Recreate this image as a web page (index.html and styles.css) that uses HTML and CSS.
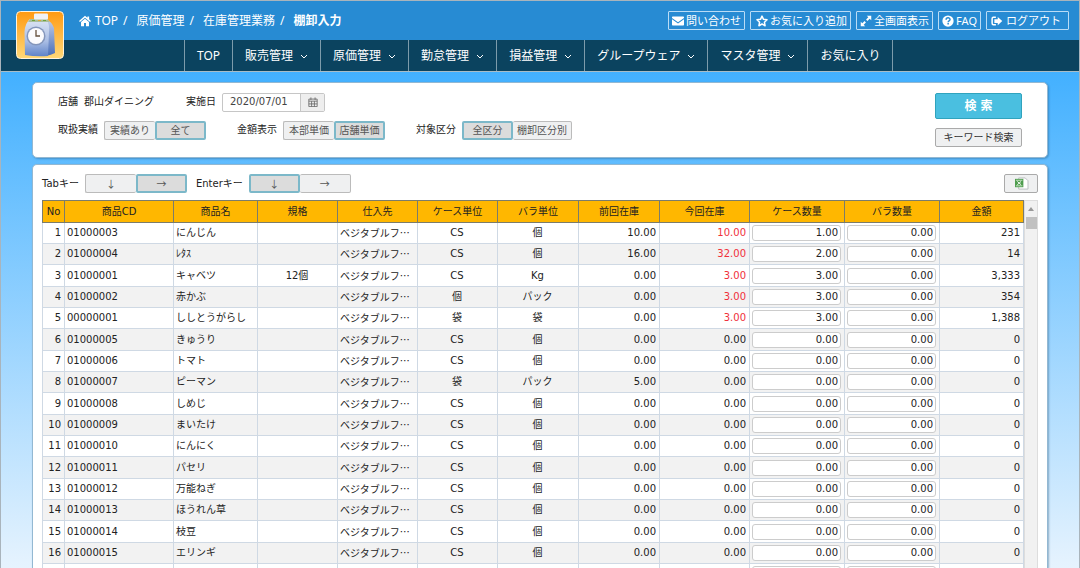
FILE: index.html
```html
<!DOCTYPE html>
<html lang="ja">
<head>
<meta charset="utf-8">
<title>棚卸入力</title>
<meta name="viewport" content="width=device-width, initial-scale=1">
<link rel="stylesheet" href="styles.css">
</head>
<body>
<header class="site-header">
  <div class="topbar">
    <nav class="crumbs" aria-label="パンくず">
      <a href="#"><svg class="icon" viewBox="0 0 16 16"><path d="M8 1 0 8l1.200 1.300L8 3.600l6.800 5.700L16 8l-2.500-2.200V2h-2.300v1.800zM8 5 2.700 9.300V15h4V10.500h2.600V15h4V9.300z"/></svg>TOP</a><span>/</span>
      <a href="#">原価管理</a><span>/</span>
      <a href="#">在庫管理業務</a><span>/</span>
      <strong>棚卸入力</strong>
    </nav>
    <div class="tools">
      <button type="button" class="tool"><svg class="icon" viewBox="0 0 16 16"><path d="M1 2h14a1 1 0 0 1 1 1v1L8 9.500 0 4V3a1 1 0 0 1 1-1zM0 5.800 8 11.300l8-5.500V13a1 1 0 0 1-1 1H1a1 1 0 0 1-1-1z"/></svg>問い合わせ</button>
      <button type="button" class="tool tool-star"><svg class="icon" viewBox="0 0 16 16"><path d="M8 1.500l2 4.300 4.700.6-3.500 3.200.9 4.700L8 12l-4.100 2.300.9-4.700L1.300 6.400 6 5.800z" fill="none" stroke="currentColor" stroke-width="2" stroke-linejoin="round"/></svg>お気に入り追加</button>
      <button type="button" class="tool"><svg class="icon" viewBox="0 0 16 16"><path d="M9 1h6v6l-2.100-2.100-3 3-1.800-1.800 3-3zM7 15H1V9l2.100 2.100 3-3 1.800 1.800-3 3z"/></svg>全画面表示</button>
      <button type="button" class="tool"><svg class="icon" viewBox="0 0 16 16"><circle cx="8" cy="8" r="7.500"/><path d="M5.500 6.300C5.500 3 10.700 3.100 10.700 6c0 1.900-2.500 1.900-2.500 3.600M8.200 10.800v2" fill="none" stroke="#278bd3" stroke-width="2"/></svg>FAQ</button>
      <button type="button" class="tool tool-wide"><svg class="icon" viewBox="0 0 16 16"><path d="M6.500 3H3.200Q1.500 3 1.500 5v6q0 2 1.700 2h3.300" fill="none" stroke="currentColor" stroke-width="2"/><path d="M9 2.500 15 8l-6 5.500V10.500H4.500v-5H9z"/></svg>ログアウト</button>
    </div>
  </div>
  <nav class="menu" aria-label="メニュー">
    <a href="#">TOP</a>
    <a href="#">販売管理<svg class="chev" viewBox="0 0 8 8"><path d="M1 3l3 3 3-3"/></svg></a>
    <a href="#">原価管理<svg class="chev" viewBox="0 0 8 8"><path d="M1 3l3 3 3-3"/></svg></a>
    <a href="#">勤怠管理<svg class="chev" viewBox="0 0 8 8"><path d="M1 3l3 3 3-3"/></svg></a>
    <a href="#">損益管理<svg class="chev" viewBox="0 0 8 8"><path d="M1 3l3 3 3-3"/></svg></a>
    <a href="#">グループウェア<svg class="chev" viewBox="0 0 8 8"><path d="M1 3l3 3 3-3"/></svg></a>
    <a href="#">マスタ管理<svg class="chev" viewBox="0 0 8 8"><path d="M1 3l3 3 3-3"/></svg></a>
    <a href="#">お気に入り</a>
  </nav>
  <svg class="logo" viewBox="0 0 48 48">
    <defs>
      <linearGradient id="sky" x1="0" y1="0" x2="0" y2="1"><stop offset="0" stop-color="#ff9a12"/><stop offset="1" stop-color="#ffd877"/></linearGradient>
      <linearGradient id="body" x1="0" y1="0" x2="0" y2="1"><stop offset="0" stop-color="#dde5f4"/><stop offset=".6" stop-color="#a9bde4"/><stop offset="1" stop-color="#5f83c8"/></linearGradient>
      <linearGradient id="side" x1="0" y1="0" x2="0" y2="1"><stop offset="0" stop-color="#c3cfe8"/><stop offset="1" stop-color="#4a6fb9"/></linearGradient>
    </defs>
    <rect x=".5" y=".5" width="47" height="47" rx="4" fill="url(#sky)" stroke="#fff3dd"/>
    <path d="M30 8q6 3 8 9l1 25q-4 2-9 3z" fill="url(#side)"/>
    <path d="M14 8h16q4 5 3 13l-1 24q-12 1-23-1L8.500 21Q9 12 14 8z" fill="url(#body)"/>
    <path d="M14 8h17l3 3H12z" fill="#a9bf9a"/>
    <path d="M16 9.500h3M27 9.500h3" stroke="#6fa23c"/>
    <path d="M22 9.500h3" stroke="#e0a637"/>
    <rect x="18" y="2.500" width="14" height="6" rx="1" fill="#f1f2f5"/>
    <circle cx="20" cy="25" r="9.500" fill="#8496bb"/>
    <circle cx="20" cy="25" r="8" fill="#fbfbfd"/>
    <path d="M20 19v6h4" fill="none" stroke="#66513f" stroke-width="1.300"/>
  </svg>
</header>
<main class="page">
  <form class="panel search">
    <div class="filters">
      <div class="line">
        <div class="pair"><span>店舗</span><span class="shop">郡山ダイニング</span></div>
        <label class="pair date">実施日 <span class="datebox"><input type="text" value="2020/07/01"><button type="button" aria-label="カレンダー"><svg class="cal" viewBox="0 0 12 12"><path d="M1 2.500h10v9H1zM1 5h10M1 8.300h10M4.300 5v6.500M7.700 5v6.500M3.500.5v3M8.500.5v3"/></svg></button></span></label>
      </div>
      <div class="line">
        <div class="pair first">取扱実績 <div class="seg"><button type="button">実績あり</button><button type="button" class="on">全て</button></div></div>
        <div class="pair second">金額表示 <div class="seg"><button type="button">本部単価</button><button type="button" class="on">店舗単価</button></div></div>
        <div class="pair">対象区分 <div class="seg"><button type="button" class="on">全区分</button><button type="button">棚卸区分別</button></div></div>
      </div>
    </div>
    <div class="actions">
      <button type="button" class="go">検 索</button>
      <button type="button" class="keyword">キーワード検索</button>
    </div>
  </form>
  <section class="panel list">
    <div class="keys">
      <div class="pair">Tabキー <div class="seg"><button type="button">↓</button><button type="button" class="on">→</button></div></div>
      <div class="pair">Enterキー <div class="seg"><button type="button" class="on">↓</button><button type="button">→</button></div></div>
      <button type="button" class="excel" aria-label="Excel出力"><svg viewBox="0 0 16 14"><path d="M5 1h7l3 3v9H5z" fill="#fff" stroke="#b9bcc0"/><rect x="1" y="2" width="9" height="9" fill="#4f9d4f"/><path d="M2 3.500h7M2 9.500h7" stroke="#c9e5c5"/><path d="M3.500 4.800l4 3.500M7.500 4.800l-4 3.500" stroke="#fff"/></svg></button>
    </div>
    <div class="gridbox">
      <table class="grid">
        <colgroup><col class="w-no"><col class="w-cd"><col class="w-name"><col class="w-unit"><col class="w-unit"><col class="w-unit"><col class="w-unit2"><col class="w-unit2"><col class="w-now"><col class="w-qty"><col class="w-qty"><col class="w-sum"></colgroup>
        <thead><tr><th>No</th><th>商品CD</th><th>商品名</th><th>規格</th><th>仕入先</th><th>ケース単位</th><th>バラ単位</th><th>前回在庫</th><th>今回在庫</th><th>ケース数量</th><th>バラ数量</th><th>金額</th></tr></thead>
        <tbody>
          <tr><td>1</td><td>01000003</td><td>にんじん</td><td></td><td>ベジタブルフ…</td><td>CS</td><td>個</td><td>10.00</td><td class="red">10.00</td><td><input value="1.00" aria-label="ケース数量"></td><td><input value="0.00" aria-label="バラ数量"></td><td>231</td></tr>
          <tr><td>2</td><td>01000004</td><td>ﾚﾀｽ</td><td></td><td>ベジタブルフ…</td><td>CS</td><td>個</td><td>16.00</td><td class="red">32.00</td><td><input value="2.00" aria-label="ケース数量"></td><td><input value="0.00" aria-label="バラ数量"></td><td>14</td></tr>
          <tr><td>3</td><td>01000001</td><td>キャベツ</td><td>12個</td><td>ベジタブルフ…</td><td>CS</td><td>Kg</td><td>0.00</td><td class="red">3.00</td><td><input value="3.00" aria-label="ケース数量"></td><td><input value="0.00" aria-label="バラ数量"></td><td>3,333</td></tr>
          <tr><td>4</td><td>01000002</td><td>赤かぶ</td><td></td><td>ベジタブルフ…</td><td>個</td><td>パック</td><td>0.00</td><td class="red">3.00</td><td><input value="3.00" aria-label="ケース数量"></td><td><input value="0.00" aria-label="バラ数量"></td><td>354</td></tr>
          <tr><td>5</td><td>00000001</td><td>ししとうがらし</td><td></td><td>ベジタブルフ…</td><td>袋</td><td>袋</td><td>0.00</td><td class="red">3.00</td><td><input value="3.00" aria-label="ケース数量"></td><td><input value="0.00" aria-label="バラ数量"></td><td>1,388</td></tr>
          <tr><td>6</td><td>01000005</td><td>きゅうり</td><td></td><td>ベジタブルフ…</td><td>CS</td><td>個</td><td>0.00</td><td>0.00</td><td><input value="0.00" aria-label="ケース数量"></td><td><input value="0.00" aria-label="バラ数量"></td><td>0</td></tr>
          <tr><td>7</td><td>01000006</td><td>トマト</td><td></td><td>ベジタブルフ…</td><td>CS</td><td>個</td><td>0.00</td><td>0.00</td><td><input value="0.00" aria-label="ケース数量"></td><td><input value="0.00" aria-label="バラ数量"></td><td>0</td></tr>
          <tr><td>8</td><td>01000007</td><td>ピーマン</td><td></td><td>ベジタブルフ…</td><td>袋</td><td>パック</td><td>5.00</td><td>0.00</td><td><input value="0.00" aria-label="ケース数量"></td><td><input value="0.00" aria-label="バラ数量"></td><td>0</td></tr>
          <tr><td>9</td><td>01000008</td><td>しめじ</td><td></td><td>ベジタブルフ…</td><td>CS</td><td>個</td><td>0.00</td><td>0.00</td><td><input value="0.00" aria-label="ケース数量"></td><td><input value="0.00" aria-label="バラ数量"></td><td>0</td></tr>
          <tr><td>10</td><td>01000009</td><td>まいたけ</td><td></td><td>ベジタブルフ…</td><td>CS</td><td>個</td><td>0.00</td><td>0.00</td><td><input value="0.00" aria-label="ケース数量"></td><td><input value="0.00" aria-label="バラ数量"></td><td>0</td></tr>
          <tr><td>11</td><td>01000010</td><td>にんにく</td><td></td><td>ベジタブルフ…</td><td>CS</td><td>個</td><td>0.00</td><td>0.00</td><td><input value="0.00" aria-label="ケース数量"></td><td><input value="0.00" aria-label="バラ数量"></td><td>0</td></tr>
          <tr><td>12</td><td>01000011</td><td>パセリ</td><td></td><td>ベジタブルフ…</td><td>CS</td><td>個</td><td>0.00</td><td>0.00</td><td><input value="0.00" aria-label="ケース数量"></td><td><input value="0.00" aria-label="バラ数量"></td><td>0</td></tr>
          <tr><td>13</td><td>01000012</td><td>万能ねぎ</td><td></td><td>ベジタブルフ…</td><td>CS</td><td>個</td><td>0.00</td><td>0.00</td><td><input value="0.00" aria-label="ケース数量"></td><td><input value="0.00" aria-label="バラ数量"></td><td>0</td></tr>
          <tr><td>14</td><td>01000013</td><td>ほうれん草</td><td></td><td>ベジタブルフ…</td><td>CS</td><td>個</td><td>0.00</td><td>0.00</td><td><input value="0.00" aria-label="ケース数量"></td><td><input value="0.00" aria-label="バラ数量"></td><td>0</td></tr>
          <tr><td>15</td><td>01000014</td><td>枝豆</td><td></td><td>ベジタブルフ…</td><td>CS</td><td>個</td><td>0.00</td><td>0.00</td><td><input value="0.00" aria-label="ケース数量"></td><td><input value="0.00" aria-label="バラ数量"></td><td>0</td></tr>
          <tr><td>16</td><td>01000015</td><td>エリンギ</td><td></td><td>ベジタブルフ…</td><td>CS</td><td>個</td><td>0.00</td><td>0.00</td><td><input value="0.00" aria-label="ケース数量"></td><td><input value="0.00" aria-label="バラ数量"></td><td>0</td></tr>
          <tr><td></td><td></td><td></td><td></td><td></td><td></td><td></td><td></td><td></td><td><input aria-label="ケース数量"></td><td><input aria-label="バラ数量"></td><td></td></tr>
        </tbody>
      </table>
      <div class="scroll"><svg viewBox="0 0 8 6"><path d="M1 5l3-4 3 4z"/></svg><div class="thumb"></div></div>
    </div>
  </section>
</main>
</body>
</html>
```
FILE: styles.css
```css
* { box-sizing: border-box; }
body {
  margin: 0;
  height: 100vh;
  overflow: hidden;
  display: flex;
  flex-direction: column;
  border: solid #a9b4bc;
  border-width: 1px 1px 0;
  background: linear-gradient(#42b0ff 70px, #e6f3fe);
  font: 10px/14px "DejaVu Sans", "Noto Sans CJK JP", sans-serif;
  color: #222;
}
button, input { font: inherit; color: inherit; margin: 0; }
.icon { width: 12px; height: 12px; fill: currentColor; flex: none; }

.site-header {
  position: relative;
  flex: none;
  color: #fff;
  font-family: "Noto Sans", "Noto Sans CJK JP", sans-serif;
  font-size: 12px;
  line-height: 16px;
}
.topbar {
  display: flex;
  justify-content: space-between;
  align-items: center;
  height: 39px;
  padding: 0 10px 0 78px;
  background: #278bd3;
}
.crumbs { display: flex; align-items: center; }
.crumbs a { display: flex; align-items: center; gap: 4px; color: inherit; text-decoration: none; }
.crumbs span { margin: 0 9px 0 5px; }
.tools { display: flex; gap: 5px; }
.tool {
  display: flex;
  align-items: center;
  gap: 2px;
  height: 19px;
  padding: 0 3px;
  border: 1px solid #b9dcf6;
  border-radius: 1px;
  background: none;
  font-size: 11px;
}
.tool-star { padding: 0 3px 0 5px; }
.tool-wide { padding: 0 7px 0 4px; gap: 3px; }

.menu {
  display: flex;
  height: 32px;
  padding-left: 183px;
  background: #0b435f;
  border-bottom: 1px solid #a9bcc6;
}
.menu a {
  display: flex;
  align-items: center;
  gap: 7px;
  padding: 0 12px;
  border-left: 1px solid #7d9cab;
  color: #fff;
  text-decoration: none;
}
.menu a:last-child { border-right: 1px solid #7d9cab; }
.chev { width: 8px; height: 8px; fill: none; stroke: #fff; }
.logo { position: absolute; left: 15px; top: 10px; width: 48px; height: 48px; }

.page {
  flex: 1;
  min-height: 0;
  display: flex;
  flex-direction: column;
  gap: 6px;
  padding: 10px 31px 0;
}
.panel {
  background: #fff;
  border: 1px solid #93b8d2;
  border-radius: 5px;
  box-shadow: 1px 1px 2px rgba(30, 80, 120, .4);
}
.search { flex: none; display: flex; justify-content: space-between; height: 76px; padding: 9px 25px 0; }
.filters { display: flex; flex-direction: column; gap: 8px; }
.line { display: flex; align-items: center; height: 20px; }
.pair { display: flex; align-items: center; gap: 6px; }
.date { margin-left: 32px; }
.first, .second { margin-right: 31px; }
.datebox { display: flex; width: 103px; height: 19px; border: 1px solid #c6c6c6; border-radius: 2px; }
.datebox input { width: 77px; border: 0; padding: 0 7px; background: none; color: #444; }
.datebox button {
  flex: 1;
  display: flex;
  align-items: center;
  justify-content: center;
  padding: 0;
  border: 0;
  border-left: 1px solid #c6c6c6;
  background: #eee;
}
.cal { width: 10px; height: 10px; fill: none; stroke: #666; }

.seg { display: flex; }
.seg button {
  min-width: 51px;
  height: 19px;
  padding: 0 4px;
  border: 1px solid #bbb;
  border-radius: 2px;
  background: #eff0f1;
  color: #555;
  font-family: "Noto Sans CJK JP", sans-serif;
  line-height: 14px;
  white-space: nowrap;
}
.seg .on { border: 2px solid #7cb8c9; background: #dcdcdc; padding: 0 3px; }
.seg button:first-child { border-right-width: 0; }
.seg .on:first-child { border-right-width: 2px; }
.seg .on + button { border-left-width: 0; }

.actions { display: flex; flex-direction: column; align-items: stretch; gap: 9px; width: 87px; padding-top: 1px; }
.go {
  height: 26px;
  padding: 0;
  border: 1px solid #30a3bd;
  border-radius: 2px;
  background: #4abfe0;
  color: #fff;
  font-size: 12px;
  font-weight: bold;
}
.keyword { height: 19px; padding: 0; border: 1px solid #aaa; border-radius: 2px; background: #eff0f1; color: #333; }

.list { flex: 1; min-height: 0; overflow: hidden; padding: 9px 9px 0; border-bottom: 0; border-radius: 5px 5px 0 0; }
.keys { display: flex; align-items: center; gap: 9px; height: 19px; margin-bottom: 7px; }
.excel {
  display: flex;
  align-items: center;
  justify-content: center;
  width: 34px;
  height: 19px;
  margin-left: auto;
  padding: 0;
  border: 1px solid #aaa;
  border-radius: 2px;
  background: #eff0f1;
}
.excel svg { width: 15px; height: 13px; }

.gridbox { display: flex; }
.grid { flex: 1; table-layout: fixed; width: 0; border-collapse: collapse; }
.w-no { width: 22px; }
.w-cd { width: 109px; }
.w-name { width: 84px; }
.w-unit { width: 80px; }
.w-unit2 { width: 81px; }
.w-now { width: 90px; }
.w-qty { width: 95px; }
.w-sum { width: 84px; }
.grid th { height: 22px; padding: 0; border: 1px solid #7b7c6b; background: #ffb700; font-weight: normal; }
.grid td { height: 21px; padding: 0 3px 0 2px; border: 1px solid #cfd9e4; text-align: center; white-space: nowrap; overflow: hidden; }
.grid tr:nth-child(3n) td { height: 22px; }
.grid tr:nth-child(even) td { background: #f2f2f2; }
.grid td:nth-child(2), .grid td:nth-child(3), .grid td:nth-child(5) { text-align: left; }
.grid td:nth-child(5) { font-family: "Noto Sans CJK JP", sans-serif; }
.grid td:nth-child(1), .grid td:nth-child(8), .grid td:nth-child(9), .grid td:nth-child(12) { text-align: right; }
.grid .red { color: #f0303a; }
.grid input {
  display: block;
  width: 100%;
  height: 16px;
  padding: 0 2px 1px;
  border: 1px solid #ccc;
  border-radius: 3px;
  background: #fff;
  text-align: right;
}
.scroll { width: 15px; padding-top: 5px; background: #f1f1f1; border: 1px solid #ddd; display: flex; flex-direction: column; align-items: center; gap: 5px; }
.scroll svg { width: 8px; height: 6px; fill: #999; }
.thumb { width: 11px; height: 12px; background: #c1c1c1; }
```
